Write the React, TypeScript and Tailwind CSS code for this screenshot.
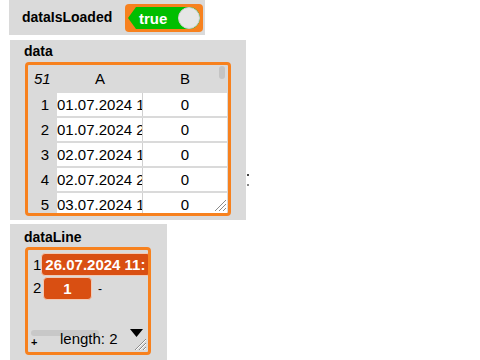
import React from 'react';

const ORANGE = 'border-[#f7811e]';

const Resize: React.FC = () => (
  <svg className="absolute right-[1px] bottom-[1px]" width="14" height="14" viewBox="0 0 14 14">
    <path d="M2 13 L13 2 M6 13 L13 6 M10 13 L13 10" stroke="#8a8a8a" strokeWidth="1" fill="none" />
    <path d="M3 13 L13 3 M7 13 L13 7 M11 13 L13 11" stroke="#ffffff" strokeWidth="1" fill="none" />
  </svg>
);

const rows = [
  { n: 1, a: '01.07.2024 12:00', b: '0' },
  { n: 2, a: '01.07.2024 20:00', b: '0' },
  { n: 3, a: '02.07.2024 12:00', b: '0' },
  { n: 4, a: '02.07.2024 20:00', b: '0' },
  { n: 5, a: '03.07.2024 12:00', b: '0' },
];

const App: React.FC = () => {
  return (
    <div className="w-[480px] h-[360px] overflow-hidden bg-white font-['Liberation_Sans',Arial,sans-serif] text-black flex flex-col items-start pl-[9px]">
      {/* dataIsLoaded */}
      <div className="w-[196px] h-[35px] bg-[#dadada] flex items-center pl-[13px]">
        <span className="text-[14px] font-bold w-[103px]">dataIsLoaded</span>
        <div className="w-[78px] h-[28px] bg-[#f7811e] rounded-[4px] p-[3px] mt-[1px]">
          <div className="relative h-[22px] bg-[#00be00] rounded-r-[11px] [clip-path:polygon(8px_0,100%_0,100%_100%,8px_100%,0_50%)] flex items-center">
            <span className="ml-[11px] text-white font-bold text-[15px] leading-none">true</span>
            <div className="absolute right-[0px] top-[0px] w-[22px] h-[22px] rounded-full bg-[#e6e6e6] border border-[#cfcfcf]" />
          </div>
        </div>
      </div>

      {/* data */}
      <div className="relative mt-[5px] ml-[1px] w-[236px] h-[180px] bg-[#dadada] flex flex-col">
        <span className="ml-[14px] mt-[3px] h-[16px] leading-[16px] text-[14px] font-bold">data</span>
        <div className={`relative ml-[15px] mt-[3px] w-[206px] h-[154px] border-[3px] ${ORANGE} rounded-[4px] overflow-hidden bg-[#dadada] text-[15px]`}>
          <div className="flex h-[28px] items-center pt-[1px]">
            <span className="w-[29px] pl-[6px] italic">51</span>
            <span className="w-[86px] text-center">A</span>
            <span className="w-[84px] text-center">B</span>
          </div>
          {rows.map((r) => (
            <div key={r.n} className="flex h-[25px] pb-[2px]">
              <span className="w-[29px] pr-[8px] text-right leading-[23px]">{r.n}</span>
              <span className="w-[85px] bg-white leading-[23px] whitespace-nowrap overflow-hidden">{r.a}</span>
              <span className="w-[1px] bg-[#d0d0d0]" />
              <span className="w-[84px] bg-white text-center leading-[23px]">{r.b}</span>
            </div>
          ))}
          <div className="absolute right-[3px] top-[1px] w-[6px] h-[13px] rounded-[3px] bg-[#c4c4c4]" />
          <Resize />
        </div>
        <div className="absolute right-[-3px] top-[134px] w-[2px] h-[2px] bg-[#444]" />
        <div className="absolute right-[-3px] top-[144px] w-[2px] h-[2px] bg-[#888]" />
      </div>

      {/* dataLine */}
      <div className="mt-[4px] ml-[1px] w-[157px] flex-1 bg-[#dadada] flex flex-col">
        <span className="ml-[14px] mt-[5px] h-[16px] leading-[16px] text-[14px] font-bold">dataLine</span>
        <div className={`relative ml-[15px] mt-[2px] w-[126px] h-[108px] border-[3px] ${ORANGE} rounded-[4px] overflow-hidden flex flex-col`}>
          <div className="flex items-center mt-[3px] h-[23px]">
            <span className="w-[15px] pl-[5px] text-[15px] pt-[2px]">1</span>
            <div className="w-[110px] h-[23px] shrink-0 bg-[#d94f12] border border-[#f2c9b4] rounded-[4px] text-white font-bold text-[15px] leading-[21px] pl-[3px]">
              <div className="w-[100px] whitespace-nowrap overflow-hidden">26.07.2024 11:00</div>
            </div>
          </div>
          <div className="flex items-center mt-[1px] h-[23px]">
            <span className="w-[15px] pl-[5px] text-[15px]">2</span>
            <div className="w-[49px] h-[23px] bg-[#d94f12] border border-[#f2c9b4] rounded-[4px] text-white font-bold text-[15px] leading-[21px] text-center">
              1
            </div>
            <span className="ml-[6px] text-[12px]">-</span>
          </div>
          <div className="mt-auto mb-[16px] ml-[3px] w-[68px] h-[6px] rounded-[3px] bg-[#c8c8c8]" />
          <div className="absolute left-[3px] bottom-[4px] text-[11px] font-bold leading-none">+</div>
          <div className="absolute left-[32px] bottom-[6px] text-[15px] leading-none">length: 2</div>
          <svg className="absolute right-[5px] bottom-[15px]" width="13" height="8" viewBox="0 0 13 8">
            <path d="M0 0 H13 L6.5 8 Z" fill="#000" />
          </svg>
          <Resize />
        </div>
      </div>
    </div>
  );
};

export default App;
